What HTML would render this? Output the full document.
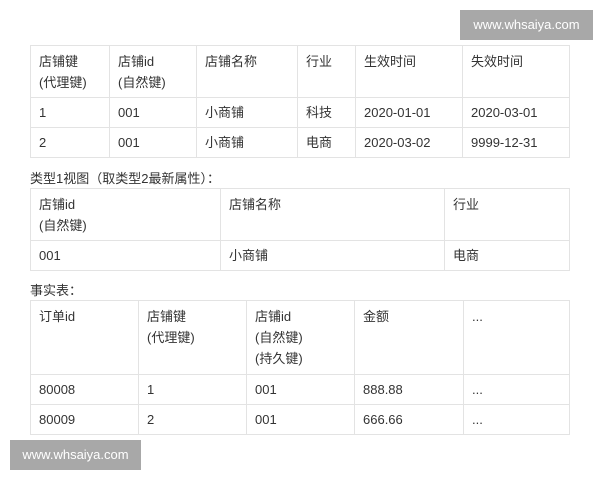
<!DOCTYPE html>
<html><head><meta charset="utf-8"><style>
body{margin:0;width:600px;height:480px;background:#fff;position:relative;overflow:hidden;font-family:"Liberation Sans","Noto Sans CJK SC",sans-serif;font-size:13px;color:#333}
table{position:absolute;border-collapse:collapse;left:30px;width:539px;table-layout:fixed}
td{border:1px solid #e3e3e3;padding:0 8px;vertical-align:top;line-height:21px}
tr.h td{padding-top:5px}
tr.d td{height:29px;vertical-align:middle;padding:0 8px}
.cap{position:absolute;left:30px;font-size:13px}
.wm{position:absolute;background:#a8a8a8;color:#fff;font-size:13px;text-align:center;line-height:30px}
</style></head><body>
<div class="wm" style="left:460px;top:10px;width:133px;height:30px">www.whsaiya.com</div>
<table style="top:45px">
<colgroup><col style="width:79px"><col style="width:87px"><col style="width:101px"><col style="width:58px"><col style="width:107px"><col style="width:107px"></colgroup>
<tr class="h"><td style="height:46px">店铺键<br>(代理键)</td><td>店铺id<br>(自然键)</td><td>店铺名称</td><td>行业</td><td>生效时间</td><td>失效时间</td></tr>
<tr class="d"><td>1</td><td>001</td><td>小商铺</td><td>科技</td><td>2020-01-01</td><td>2020-03-01</td></tr>
<tr class="d"><td>2</td><td>001</td><td>小商铺</td><td>电商</td><td>2020-03-02</td><td>9999-12-31</td></tr>
</table>
<div class="cap" style="top:168px">类型1视图（取类型2最新属性）：</div>
<table style="top:188px">
<colgroup><col style="width:190px"><col style="width:224px"><col style="width:125px"></colgroup>
<tr class="h"><td style="height:46px">店铺id<br>(自然键)</td><td>店铺名称</td><td>行业</td></tr>
<tr class="d"><td>001</td><td>小商铺</td><td>电商</td></tr>
</table>
<div class="cap" style="top:280px">事实表：</div>
<table style="top:300px">
<colgroup><col style="width:108px"><col style="width:108px"><col style="width:108px"><col style="width:109px"><col style="width:106px"></colgroup>
<tr class="h"><td style="height:68px">订单id</td><td>店铺键<br>(代理键)</td><td>店铺id<br>(自然键)<br>(持久键)</td><td>金额</td><td>...</td></tr>
<tr class="d"><td>80008</td><td>1</td><td>001</td><td>888.88</td><td>...</td></tr>
<tr class="d"><td>80009</td><td>2</td><td>001</td><td>666.66</td><td>...</td></tr>
</table>
<div class="wm" style="left:10px;top:440px;width:131px;height:30px">www.whsaiya.com</div>
</body></html>
